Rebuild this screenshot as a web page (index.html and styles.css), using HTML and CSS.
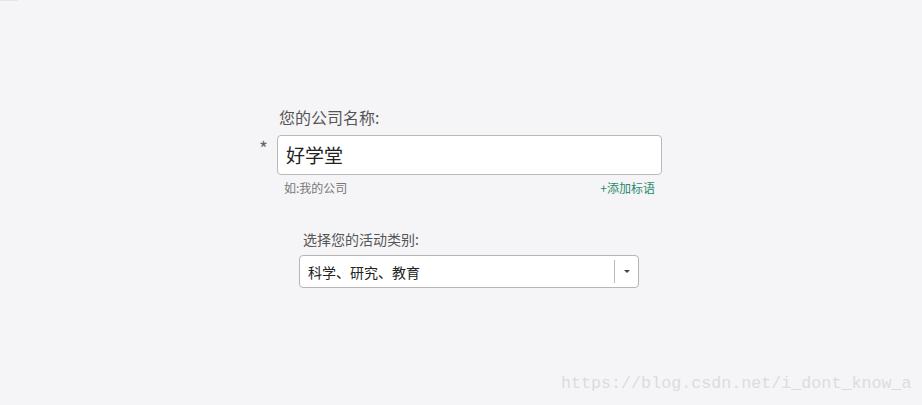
FILE: index.html
```html
<!DOCTYPE html>
<html lang="zh">
<head>
<meta charset="utf-8">
<link rel="stylesheet" href="styles.css">
</head>
<body>
<div class="topline"></div>
<main class="form">
  <div class="field">
    <div class="label">您的公司名称:</div>
    <div class="input-row">
      <span class="req">*</span>
      <div class="input">好学堂</div>
    </div>
    <div class="hint-row">
      <span class="hint">如:我的公司</span>
      <span class="add">+添加标语</span>
    </div>
  </div>
  <div class="field2">
    <div class="label2">选择您的活动类别:</div>
    <div class="select">
      <span class="select-text">科学、研究、教育</span>
      <span class="select-btn"><span class="caret"></span></span>
    </div>
  </div>
</main>
<div class="watermark">https://blog.csdn.net/i_dont_know_a</div>
</body>
</html>
```
FILE: styles.css
```css
html, body {
  margin: 0;
  padding: 0;
}
body {
  width: 922px;
  height: 405px;
  background: #f5f5f7;
  font-family: "Noto Sans CJK SC", "Liberation Sans", sans-serif;
  position: relative;
  overflow: hidden;
}
.topline {
  width: 18px;
  height: 1px;
  background: #e6e6e6;
}
.form {
  padding-top: 104px;
  padding-left: 255px;
}
.field {
  width: 407px;
}
.label {
  padding-left: 24px;
  font-size: 16px;
  line-height: 24px;
  color: #555;
  margin-bottom: 6px;
}
.input-row {
  display: flex;
  align-items: flex-start;
}
.req {
  width: 22px;
  font-size: 19px;
  line-height: 26px;
  color: #666;
  padding-left: 4px;
  box-sizing: border-box;
}
.input {
  flex: 1;
  height: 40px;
  box-sizing: border-box;
  border: 1px solid #b9b9b9;
  border-radius: 4px;
  background: #fff;
  padding-left: 8px;
  font-size: 19px;
  line-height: 38px;
  color: #222;
}
.hint-row {
  display: flex;
  justify-content: space-between;
  padding-left: 29px;
  padding-right: 7px;
  margin-top: 4px;
  font-size: 12px;
  line-height: 18px;
}
.hint {
  color: #777;
}
.add {
  color: #2b8a6d;
}
.field2 {
  padding-left: 44px;
  margin-top: 32px;
  width: 340px;
}
.label2 {
  padding-left: 4px;
  font-size: 14px;
  line-height: 20px;
  color: #555;
  margin-bottom: 6px;
}
.select {
  display: flex;
  align-items: center;
  height: 33px;
  box-sizing: border-box;
  border: 1px solid #b5b5b5;
  border-radius: 4px;
  background: #fff;
}
.select-text {
  flex: 1;
  padding-left: 8px;
  font-size: 14px;
  color: #222;
}
.select-btn {
  width: 23px;
  height: 23px;
  border-left: 1px solid #bbb;
  display: flex;
  align-items: center;
  justify-content: center;
}
.caret {
  width: 0;
  height: 0;
  border-left: 3px solid transparent;
  border-right: 3px solid transparent;
  border-top: 3px solid #444;
}
.watermark {
  position: absolute;
  left: 561px;
  top: 373px;
  font-family: "Liberation Mono", "DejaVu Sans Mono", monospace;
  font-size: 16.7px;
  line-height: 22px;
  color: #dcdcdc;
}
```
